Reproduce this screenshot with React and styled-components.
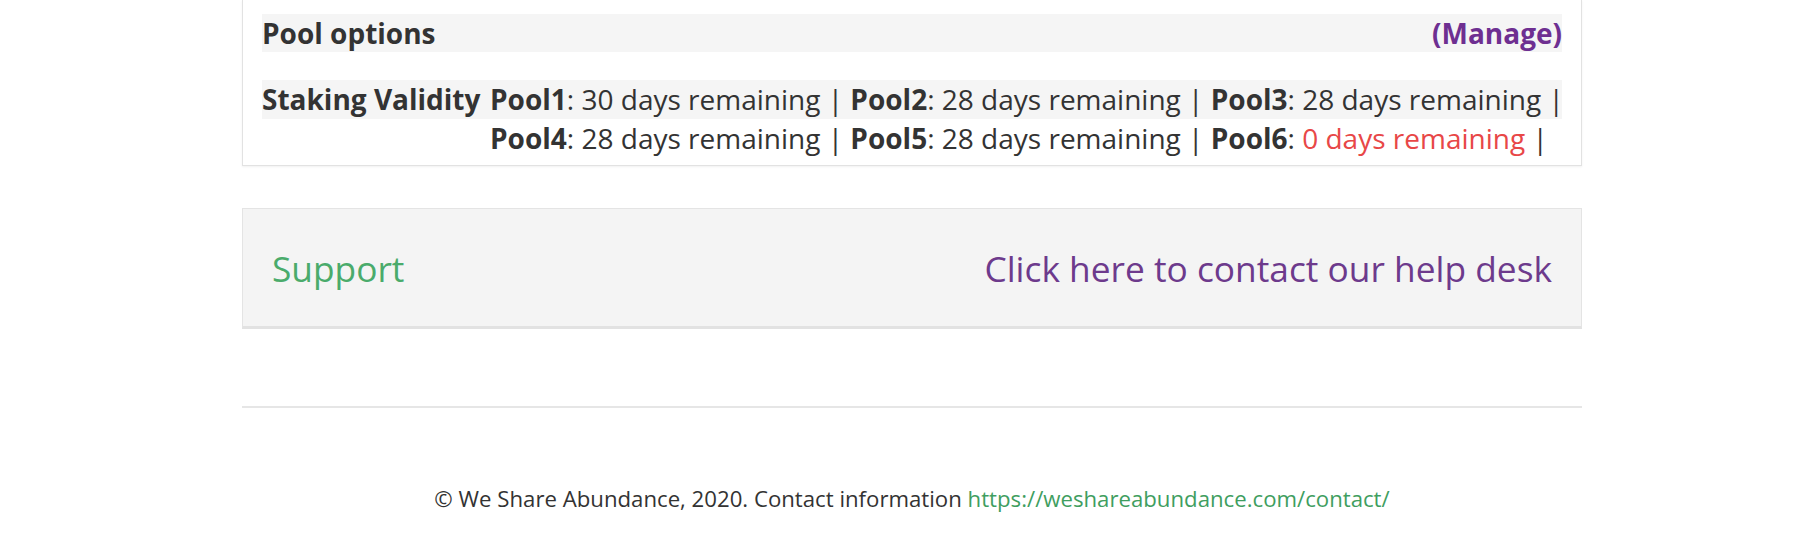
import React from 'react';
import styled, { createGlobalStyle } from 'styled-components';

const GlobalStyle = createGlobalStyle`
  body {
    margin: 0;
    background: #fff;
    font-family: "Open Sans", "Liberation Sans", sans-serif;
    color: #333;
  }
`

const Page = styled.div`
  padding-left: 20px;
`

const Container = styled.div`
  width: 1340px;
  margin: 0 auto;
`

const Card = styled.section`
  border: 1px solid #e2e2e2;
  border-top: none;
  box-shadow: 0 1px 2px rgba(0, 0, 0, 0.06);
  padding: 14px 19px 7px;
`

const CardHeader = styled.div`
  display: flex;
  justify-content: space-between;
  align-items: center;
  height: 38px;
  background: #f5f5f5;
  font-size: 28px;
  font-weight: 700;
  margin-bottom: 28px;
`

const ManageLink = styled.a`
  color: #6e2f91;
  text-decoration: none;
`

const InfoRow = styled.div`
  display: grid;
  grid-template-columns: 228px 1fr;
  font-size: 28px;
  line-height: 39px;
  background: linear-gradient(#f5f5f5 0, #f5f5f5 39px, #fff 39px);
`

const InfoLabel = styled.div`
  font-weight: 700;
  white-space: nowrap;
`

const InfoValue = styled.div`
  margin-right: -10px;
`

const PoolName = styled.b`
  font-weight: 700;
`

const Remaining = styled.span`
  color: ${p => (p.$expired ? '#e84747' : '#333')};
`

const SupportBox = styled.div`
  margin-top: 42px;
  height: 117px;
  display: flex;
  justify-content: space-between;
  align-items: center;
  padding: 0 29px;
  background: #f4f4f4;
  border: 1px solid #e4e4e4;
  border-bottom: 3px solid #e2e2e2;
  font-size: 35.3px;
`

const SupportTitle = styled.span`
  color: #4aab6b;
`

const HelpLink = styled.a`
  color: #6d3a8c;
  text-decoration: none;
`

const Divider = styled.hr`
  margin: 77px 0 0;
  border: none;
  border-top: 2px solid #e6e6e6;
`

const Footer = styled.footer`
  text-align: center;
  font-size: 22.2px;
  line-height: 28px;
  padding-top: 77px;
  padding-bottom: 30px;
  color: #333;
`

const FooterLink = styled.a`
  color: #3f9e5f;
  text-decoration: none;
`

const pools = [
  { name: 'Pool1', days: 30 },
  { name: 'Pool2', days: 28 },
  { name: 'Pool3', days: 28 },
  { name: 'Pool4', days: 28 },
  { name: 'Pool5', days: 28 },
  { name: 'Pool6', days: 0 },
]

export default function App() {
  return (
    <Page>
      <GlobalStyle />
      <Container>
        <Card>
          <CardHeader>
            <span>Pool options</span>
            <ManageLink href="#">(Manage)</ManageLink>
          </CardHeader>
          <InfoRow>
            <InfoLabel>Staking Validity</InfoLabel>
            <InfoValue>
              {pools.map(pool => (
                <React.Fragment key={pool.name}>
                  <PoolName>{pool.name}</PoolName>:{' '}
                  <Remaining $expired={pool.days === 0}>{pool.days} days remaining</Remaining>
                  {'\u00a0| '}
                </React.Fragment>
              ))}
            </InfoValue>
          </InfoRow>
        </Card>

        <SupportBox>
          <SupportTitle>Support</SupportTitle>
          <HelpLink href="#">Click here to contact our help desk</HelpLink>
        </SupportBox>

        <Divider />

        <Footer>
          © We Share Abundance, 2020. Contact information{' '}
          <FooterLink href="#">https://weshareabundance.com/contact/</FooterLink>
        </Footer>
      </Container>
    </Page>
  );
}
